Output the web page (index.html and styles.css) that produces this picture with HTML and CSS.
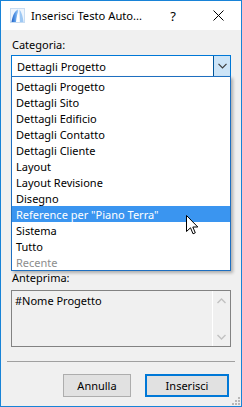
FILE: index.html
```html
<!DOCTYPE html>
<html>
<head>
<meta charset="utf-8">
<link rel="stylesheet" href="styles.css">
</head>
<body>
<div class="window">
  <div class="titlebar">
    <svg class="appicon" width="15" height="15" viewBox="0 0 15 15">
      <defs>
        <linearGradient id="g1" x1="0" y1="0" x2="1" y2="0">
          <stop offset="0" stop-color="#1f5fc4"/>
          <stop offset="0.5" stop-color="#5a9be8"/>
          <stop offset="1" stop-color="#b9dafa"/>
        </linearGradient>
      </defs>
      <rect x="0.5" y="0.5" width="14" height="14" fill="#eef5fd" stroke="#c9ddf2"/>
      <path d="M1.5 14 C2.5 8 4.5 3 8 1.5 L9 14 Z" fill="url(#g1)"/>
      <path d="M9.5 1.5 C11.5 4 13 9 13.5 14 L10 14 Z" fill="#9ec8f3"/>
      <path d="M6 14 C6.5 9 7.5 5 8.6 2.5 L9.3 14 Z" fill="#ffffff"/>
    </svg>
    <span class="title">Inserisci Testo Auto...</span>
    <span class="help">?</span>
    <svg class="close" width="11" height="11" viewBox="0 0 11 11">
      <path d="M0.5 0.5 L10.5 10.5 M10.5 0.5 L0.5 10.5" stroke="#000" stroke-width="1" fill="none"/>
    </svg>
  </div>
  <div class="content">
    <div class="label">Categoria:</div>
    <div class="combo">
      <span class="combo-text">Dettagli Progetto</span>
      <span class="combo-btn">
        <svg width="9" height="6" viewBox="0 0 9 6"><path d="M0.5 0.8 L4.5 4.8 L8.5 0.8" stroke="#3c3c3c" stroke-width="1.2" fill="none"/></svg>
      </span>
      <ul class="droplist">
        <li>Dettagli Progetto</li>
        <li>Dettagli Sito</li>
        <li>Dettagli Edificio</li>
        <li>Dettagli Contatto</li>
        <li>Dettagli Cliente</li>
        <li>Layout</li>
        <li>Layout Revisione</li>
        <li>Disegno</li>
        <li class="selected">Reference per "Piano Terra"</li>
        <li>Sistema</li>
        <li>Tutto</li>
        <li class="disabled">Recente</li>
      </ul>
      <svg class="cursor" width="13" height="20" viewBox="0 0 13 20">
        <path d="M0.5 0.5 L0.5 16.5 L4.5 12.8 L7 18.8 L9.3 17.8 L6.8 12 L11.8 12 Z" fill="#fff" stroke="#000" stroke-width="1" stroke-linejoin="miter"/>
      </svg>
    </div>
    <div class="hidden-area"></div>
    <div class="label label-preview">Anteprima:</div>
    <div class="preview">
      <div class="preview-text">#Nome Progetto</div>
      <div class="scrollbar">
        <svg width="9" height="6" viewBox="0 0 9 6"><path d="M0.5 5 L4.5 1 L8.5 5" stroke="#c2c2c2" stroke-width="1.4" fill="none"/></svg>
        <svg width="9" height="6" viewBox="0 0 9 6"><path d="M0.5 1 L4.5 5 L8.5 1" stroke="#c2c2c2" stroke-width="1.4" fill="none"/></svg>
      </div>
    </div>
    <div class="separator"></div>
    <div class="buttons">
      <button class="btn btn-cancel">Annulla</button>
      <button class="btn btn-default">Inserisci</button>
    </div>
    <svg class="grip" width="10" height="10" viewBox="0 0 10 10">
      <rect x="8" y="2" width="2" height="2" fill="#b8b8b8"/>
      <rect x="5" y="5" width="2" height="2" fill="#b8b8b8"/>
      <rect x="8" y="5" width="2" height="2" fill="#b8b8b8"/>
      <rect x="2" y="8" width="2" height="2" fill="#b8b8b8"/>
      <rect x="5" y="8" width="2" height="2" fill="#b8b8b8"/>
      <rect x="8" y="8" width="2" height="2" fill="#b8b8b8"/>
    </svg>
  </div>
</div>
</body>
</html>
```

FILE: styles.css
```css
* { box-sizing: border-box; }
html, body { margin: 0; padding: 0; }
body {
  width: 242px;
  height: 407px;
  overflow: hidden;
  font-family: "Noto Sans", "Open Sans", sans-serif;
  font-size: 11px;
  color: #000;
}
.window {
  width: 242px;
  height: 407px;
  border: 1px solid #1883d7;
  display: flex;
  flex-direction: column;
  background: #f0f0f0;
}
.titlebar {
  height: 29px;
  background: #fff;
  display: flex;
  align-items: center;
  padding-left: 9px;
  flex-shrink: 0;
}
.title {
  margin-left: 6px;
  font-size: 11.2px;
  color: #000;
  width: 136px;
  white-space: nowrap;
}
.help {
  font-size: 13px;
  width: 12px;
  text-align: center;
}
.close { margin-left: 34px; }
.content {
  position: relative;
  flex: 1;
  padding: 7px 10px 0 10px;
  display: flex;
  flex-direction: column;
}
.label {
  height: 16px;
  line-height: 16px;
  padding-left: 1px;
}
.label-preview { height: 16px; line-height: 17px; }
.combo {
  position: relative;
  margin-top: 2px;
  height: 22px;
  background: #fff;
  border: 1px solid #0078d7;
  display: flex;
  align-items: center;
}
.combo-text {
  flex: 1;
  padding-left: 5px;
  line-height: 16px;
  padding-top: 1px;
}
.combo-btn {
  width: 17px;
  height: 20px;
  background: #cce4f7;
  border-left: 1px solid #005499;
  display: flex;
  align-items: center;
  justify-content: center;
}
.droplist {
  position: absolute;
  left: -1px;
  top: 20px;
  width: 220px;
  margin: 0;
  padding: 1px 0 0 0;
  list-style: none;
  background: #fff;
  border: 1px solid #1e6fc0;
  box-shadow: 2px 2px 3px rgba(0,0,0,0.28);
  z-index: 5;
}
.droplist li {
  height: 16px;
  line-height: 17px;
  padding-left: 4px;
  white-space: nowrap;
}
.droplist li.selected {
  background: #3a95f0;
  color: #fff;
}
.droplist li.disabled { color: #8d8d8d; }
.cursor {
  position: absolute;
  left: 174px;
  top: 159px;
  z-index: 6;
}
.hidden-area {
  height: 192px;
  flex-shrink: 0;
}
.preview {
  margin-top: 5px;
  height: 57px;
  border: 1px solid #828282;
  display: flex;
  background: #f0f0f0;
}
.preview-text {
  flex: 1;
  padding: 2px 0 0 3px;
  line-height: 16px;
}
.scrollbar {
  width: 18px;
  border-left: 1px solid #fff;
  display: flex;
  flex-direction: column;
  justify-content: space-between;
  align-items: center;
  padding: 7px 0 6px 0;
}
.separator {
  margin: 14px -4px 0 -4px;
  height: 1px;
  background: #a0a0a0;
}
.buttons {
  margin-top: 12px;
  display: flex;
  justify-content: flex-end;
  gap: 14px;
  padding-right: 2px;
}
.btn {
  font-family: inherit;
  font-size: 11px;
  height: 23px;
  background: #e1e1e1;
  color: #000;
  padding: 0;
  margin: 0;
  border-radius: 0;
}
.btn-cancel {
  width: 68px;
  border: 1px solid #adadad;
}
.btn-default {
  width: 84px;
  border: 2px solid #0078d7;
}
.grip {
  position: absolute;
  right: 1px;
  bottom: 1px;
}
```
